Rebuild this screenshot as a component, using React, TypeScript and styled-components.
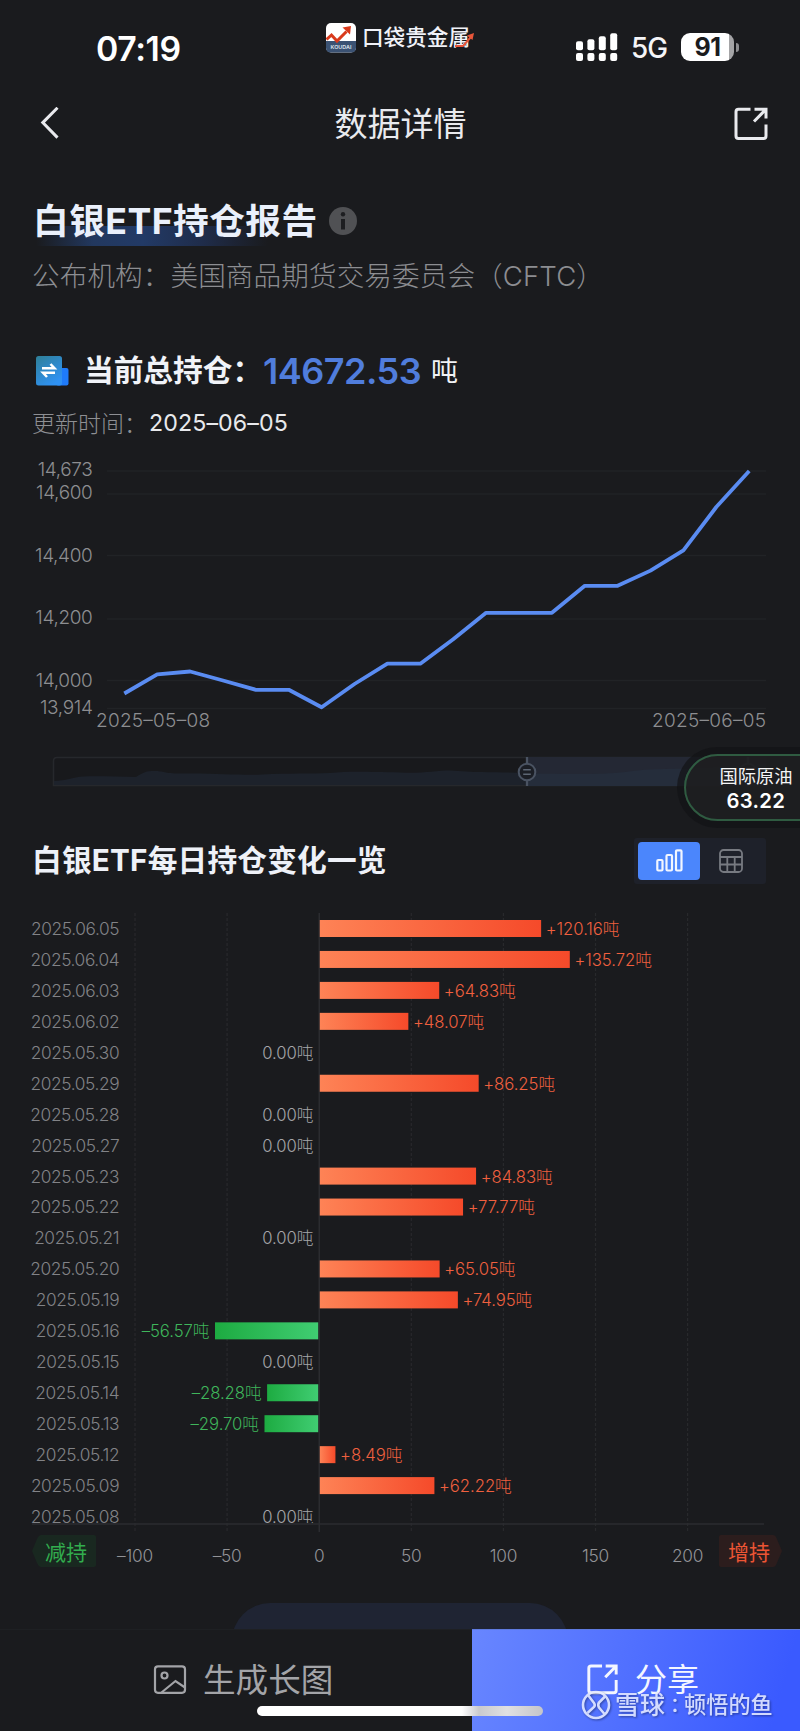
import React from 'react';
import styled, { createGlobalStyle } from 'styled-components';

const FONT = `Inter, "Noto Sans CJK SC", sans-serif`;
const BG = '#1a1b1e';

const Global = createGlobalStyle`
  * { box-sizing: border-box; }
  body { margin: 0; background: ${BG}; }
`;

const Screen = styled.div`
  position: relative;
  width: 800px;
  height: 1731px;
  display: flex;
  flex-direction: column;
  overflow: hidden;
  background: ${BG};
  color: #f2f3f6;
  font-family: ${FONT};
`;

const Txt = styled.span<{ $s: number; $w?: number; $c?: string; $ls?: number }>`
  font-size: ${(p) => p.$s}px;
  font-weight: ${(p) => p.$w ?? 400};
  color: ${(p) => p.$c ?? '#f2f3f6'};
  letter-spacing: ${(p) => p.$ls ?? 0}px;
  line-height: 1;
  white-space: nowrap;
`;

const StatusBar = styled.header`
  height: 88px;
  display: grid;
  grid-template-columns: 326px 250px 1fr;
  flex: none;
`;
const Clock = styled.div`
  padding: 32px 0 0 96px;
`;
const Brand = styled.div`
  display: flex;
  align-items: flex-start;
  padding-top: 23px;
`;
const BrandName = styled.div`
  position: relative;
  margin-left: 6px;
  height: 30px;
  padding-top: 4px;
  line-height: 0;
`;
const BrandArrow = styled.svg`
  position: absolute;
  left: 93px;
  top: 10px;
`;
const Signals = styled.div`
  display: flex;
  align-items: flex-start;
  padding-top: 33px;
`;
const Network = styled.div`
  margin-left: 13px;
  padding-top: 2px;
  width: 37px;
  line-height: 0;
`;
const Battery = styled.div`
  margin-left: 13px;
  width: 53px;
  height: 28px;
  border-radius: 9px;
  background: linear-gradient(90deg, #fff 47.5px, #a4a4a6 47.5px);
  display: flex;
  align-items: center;
  justify-content: center;
`;
const BatteryTip = styled.div`
  width: 3px;
  height: 9px;
  margin: 9.5px 0 0 2px;
  border-radius: 0 4px 4px 0;
  background: #8d8d90;
`;

const NavBar = styled.nav`
  height: 72px;
  flex: none;
  display: grid;
  grid-template-columns: 100px 1fr 100px;
  align-items: center;
  padding: 0 32px 0 33px;
`;
const NavTitle = styled.div`
  text-align: center;
  line-height: 0;
`;
const NavAction = styled.div`
  display: flex;
  justify-content: flex-end;
`;

const Intro = styled.section`
  flex: none;
  height: 182px;
  padding: 40px 0 0 33px;
`;
const TitleRow = styled.div`
  display: flex;
  align-items: center;
  height: 40px;
`;
const Headline = styled.h1`
  margin: 6px 0 0;
  width: 284px;
  height: 46px;
  padding-top: 4px;
  line-height: 0;
  background: linear-gradient(90deg, transparent 3px, #22385f 60px, #223a66 110px, #1f2c4a 170px, transparent 235px) 0 26px / 100% 21px no-repeat;
`;
const InfoIcon = styled.svg`
  margin-left: 12px;
  margin-top: 1px;
`;
const Publisher = styled.div`
  margin: 23px 0 0 -1px;
  line-height: 0;
`;

const Summary = styled.section`
  flex: none;
  height: 110px;
  padding: 7px 0 0 33px;
`;
const TotalRow = styled.div`
  display: flex;
  align-items: center;
  height: 44px;
`;
const TotalLabel = styled.div`
  margin-left: 14px;
  width: 179px;
  line-height: 0;
`;
const TotalValue = styled.div`
  width: 168px;
  line-height: 0;
`;
const UpdatedRow = styled.div`
  display: flex;
  align-items: center;
  height: 30px;
  margin: 16px 0 0 -1px;
`;
const UpdatedLabel = styled.div`
  width: 117px;
  line-height: 0;
`;

const ChartBlock = styled.svg`
  display: block;
  flex: none;
  font-family: ${FONT};
`;

const SectionHead = styled.div`
  flex: none;
  height: 73px;
  padding: 0 34px 26px 32px;
  display: flex;
  justify-content: space-between;
  align-items: center;
`;
const Toggle = styled.div`
  width: 132px;
  height: 46px;
  padding: 4px;
  display: flex;
  border-radius: 3px;
  background: #1e212a;
`;
const ToggleItem = styled.div<{ $active?: boolean }>`
  flex: 1;
  height: 38px;
  border-radius: 4px;
  display: flex;
  align-items: center;
  justify-content: center;
  background: ${(p) => (p.$active ? '#4b86fc' : 'transparent')};
`;

const More = styled.div`
  flex: 1;
  min-height: 0;
  overflow: hidden;
  display: flex;
  justify-content: center;
  padding-top: 27px;
`;
const MorePill = styled.div`
  width: 336px;
  height: 76px;
  flex: none;
  border-radius: 38px;
  background: #1f2433;
`;

const Footer = styled.footer`
  flex: none;
  height: 102px;
  display: grid;
  grid-template-columns: 472px 328px;
`;
const FooterAction = styled.div<{ $primary?: boolean }>`
  display: flex;
  align-items: flex-start;
  gap: ${(p) => (p.$primary ? 17 : 16)}px;
  padding: ${(p) => (p.$primary ? '34px 0 0 115px' : '34px 0 0 153px')};
  border-top: 1px solid ${(p) => (p.$primary ? '#5f7be0' : '#1e2023')};
  background: ${(p) => (p.$primary ? 'linear-gradient(105deg, #6886ff 0%, #3a5aff 92%)' : BG)};
`;
const HomeIndicator = styled.div`
  position: absolute;
  left: 257px;
  top: 1706px;
  width: 286px;
  height: 10px;
  border-radius: 5px;
  background: linear-gradient(90deg, #fff 0, #fff 205px, #c9cace 222px, #e0e0e2 250px, #c4c5ca 286px);
`;
const Watermark = styled.div`
  position: absolute;
  left: 581px;
  top: 1690px;
  height: 30px;
  display: flex;
  align-items: center;
  opacity: 0.88;
  filter: drop-shadow(1px 1px 1px rgba(10, 20, 60, 0.55));
`;
const WatermarkSite = styled(Txt)`
  margin-left: 4px;
`;
const WatermarkColon = styled(Txt)`
  width: 20px;
  margin-right: -1px;
  text-align: center;
  font-family: "Noto Sans CJK TC", sans-serif;
`;

const Ticker = styled.aside`
  position: absolute;
  left: 684px;
  top: 754px;
  width: 140px;
  height: 67px;
  border: 2.5px solid #2f5b41;
  border-radius: 34px 0 0 34px;
  background: rgba(30, 30, 32, 0.93);
  box-shadow: 0 0 0 7px rgba(18, 19, 21, 0.7);
  padding: 11px 0 0 33.5px;
  display: flex;
  flex-direction: column;
  gap: 6px;
`;
const TickerPrice = styled.div`
  padding-left: 7px;
  line-height: 0;
`;

const ShareIcon = ({ w, sw, c }: { w: number; sw: number; c: string }) => (
  <svg width={w} height={w} viewBox="0 0 34 34" fill="none" stroke={c} strokeWidth={sw}>
    <path d="M16.5 2.2H4.5Q2 2.2 2 4.7V29Q2 31.5 4.5 31.5H29.5Q32 31.5 32 29V17.5" />
    <path d="M20.5 2.2H32V11.5M31.5 2.7L20 14.5" />
  </svg>
);

const gridY: [number, string, number][] = [
  [471, '14,673', 469.5],
  [494, '14,600', 492.5],
  [555.5, '14,400', 555],
  [619, '14,200', 617.5],
  [680.5, '14,000', 680],
  [708.5, '13,914', 707],
];
const lineY = [693.5, 674.3, 671.5, 680.5, 689.8, 689.8, 707.3, 684, 663.7, 663.7, 639.3, 612.8, 612.8, 612.8, 585.8, 585.8, 570.6, 550.4, 507, 471];
const linePoints = lineY.map((y, i) => `${(124.3 + i * 32.89).toFixed(1)},${y}`).join(' ');

const LineChart = () => (
  <ChartBlock width="800" height="385" viewBox="0 452 800 385">
    {gridY.map(([y, t, ty]) => (
      <g key={t}>
        <line x1="107" x2="766" y1={y} y2={y} stroke="#212326" strokeWidth="1.3" />
        <text x="92.500" y={ty + 6.6} textAnchor="end" fontSize="19" fontWeight="300" letterSpacing="-0.35" fill="#8d8e91">{t}</text>
      </g>
    ))}
    <polyline points={linePoints} fill="none" stroke="#5a8cf2" strokeWidth="3.8" strokeLinejoin="round" />
    <text x="96" y="727" fontSize="19" fontWeight="300" fill="#8d8e91" textLength="114">2025–05–08</text>
    <text x="652" y="727" fontSize="19" fontWeight="300" fill="#8d8e91" textLength="114">2025–06–05</text>

    <path d="M53.5 785.5V761Q53.5 757.5 57 757.5H766V785.5Z" fill="#18191c" stroke="#26282c" strokeWidth="1.5" />
    <path d="M54 781C66 781 72 777 84 776.5C100 776 120 777 136 777C144 772 146 771 154 771C164 771 164 773.5 180 773.5C220 773 240 775.5 262 774.5C290 773 310 774 330 773C350 771 370 772 400 772.5C420 774 436 770.5 450 770.5C480 773 505 772 527 773V785H54Z" fill="#1d222b" />
    <rect x="527" y="757" width="239" height="29" fill="#242834" />
    <path d="M527 773.5C570 774 600 775 625 772C650 768 680 769 700 768.5L766 764V786H527Z" fill="#252d3b" />
    {[527, 748].map((x) => (
      <g key={x} stroke="#4a5362" fill="none">
        <line x1={x} x2={x} y1="757" y2="786" strokeWidth="2.3" />
        <circle cx={x} cy="772" r="8.3" fill="#1b1e25" strokeWidth="2" />
        <path d={`M${x - 3.8} 769.8h7.6M${x - 3.8} 774.2h7.6`} strokeWidth="1.5" stroke="#5d6674" />
      </g>
    ))}
  </ChartBlock>
);

const rows: [string, number][] = [
  ['2025.06.05', 120.16], ['2025.06.04', 135.72], ['2025.06.03', 64.83], ['2025.06.02', 48.07],
  ['2025.05.30', 0], ['2025.05.29', 86.25], ['2025.05.28', 0], ['2025.05.27', 0],
  ['2025.05.23', 84.83], ['2025.05.22', 77.77], ['2025.05.21', 0], ['2025.05.20', 65.05],
  ['2025.05.19', 74.95], ['2025.05.16', -56.57], ['2025.05.15', 0], ['2025.05.14', -28.28],
  ['2025.05.13', -29.7], ['2025.05.12', 8.49], ['2025.05.09', 62.22], ['2025.05.08', 0],
];
const ticks = [-100, -50, 0, 50, 100, 150, 200];
const UNIT = 1.842;
const ZERO = 319.2;

const BarChart = () => (
  <ChartBlock width="800" height="666" viewBox="0 910 800 666">
    <defs>
      <linearGradient id="up"><stop offset="0" stopColor="#fe8356" /><stop offset="1" stopColor="#f54a2a" /></linearGradient>
      <linearGradient id="down"><stop offset="0" stopColor="#1dab41" /><stop offset="1" stopColor="#40cd72" /></linearGradient>
      <clipPath id="plot"><rect x="0" y="910" width="800" height="613" /></clipPath>
    </defs>
    {ticks.map((t) => {
      const x = ZERO + t * UNIT;
      return (
        <g key={t}>
          <line x1={x} x2={x} y1="913" y2="1532" stroke={t ? '#28292c' : '#303135'} strokeWidth="1.2" strokeDasharray={t ? '3 2' : undefined} />
          <text x={x} y="1561.5" textAnchor="middle" fontSize="17.3" fontWeight="300" letterSpacing="-0.25" fill="#929397">{t < 0 ? `–${-t}` : t}</text>
        </g>
      );
    })}
    <g clipPath="url(#plot)">
      {rows.map(([d, v], i) => {
        const cy = 928.5 + i * 30.95;
        const w = Math.abs(v) * UNIT - (v < 0 ? 1 : 0);
        const label = `${v > 0 ? '+' : v < 0 ? '–' : ''}${Math.abs(v).toFixed(2)}吨`;
        return (
          <g key={d} fontWeight="300">
            <text x="119.2" y={cy + 6.4} textAnchor="end" fontSize="17.3" letterSpacing="-0.38" fill="#828387">{d}</text>
            {v !== 0 && <rect x={v > 0 ? 319.8 : 318.2 - w} y={cy - 8.5} width={w} height="17" fill={v > 0 ? 'url(#up)' : 'url(#down)'} />}
            <text
              x={v > 0 ? ZERO + w + 5.2 : v < 0 ? ZERO - w - 6.5 : 313.5}
              y={cy + 6.4}
              textAnchor={v > 0 ? 'start' : 'end'}
              fontSize="16.7"
              letterSpacing="-0.05"
              fill={v > 0 ? '#f0603f' : v < 0 ? '#3fb65b' : '#a5a6a9'}
            >{label}</text>
          </g>
        );
      })}
    </g>
    <line x1="32" x2="764" y1="1524" y2="1524" stroke="#2b2d30" strokeWidth="1.5" />
    <path d="M41 1535H94Q96 1535 96 1537V1565Q96 1567 94 1567H41Q39 1567 37 1563L32 1551L37 1539Q39 1535 41 1535Z" fill="#192820" />
    <text x="45" y="1560" fontSize="21" fill="#32ad4e">减持</text>
    <path d="M721 1535H773Q775 1535 776 1537L782 1551L776 1565Q775 1567 773 1567H721Q719 1567 719 1565V1537Q719 1535 721 1535Z" fill="#2c1d1d" />
    <text x="728" y="1560" fontSize="21" fill="#ee5534">增持</text>
  </ChartBlock>
);

export default function App() {
  return (
    <>
      <Global />
      <Screen>
        <StatusBar>
          <Clock><Txt $s={33.8} $w={600} $c="#fff" $ls={-0.4}>07:19</Txt></Clock>
          <Brand>
            <svg width="30" height="30" viewBox="0 0 30 30">
              <rect width="30" height="29.5" rx="5" fill="#fff" />
              <path d="M0 18H30V24.5Q30 29.5 25 29.5H5Q0 29.5 0 24.5Z" fill="#3b5273" />
              <path d="M0.5 16.5L5.5 12L11 18L20.5 8.5" fill="none" stroke="#d93a1c" strokeWidth="3" />
              <path d="M16.5 4.5L25 3L24 11.5Z" fill="#d93a1c" />
              <text x="15" y="26" textAnchor="middle" fontFamily="Inter" fontSize="5.4" fontWeight="600" fill="#dfe5ee">KOUDAI</text>
            </svg>
            <BrandName>
              <Txt $s={21.6} $w={500} $c="#f0f2f8">口袋贵金属</Txt>
              <BrandArrow width="20" height="15" viewBox="0 0 20 15">
                <path d="M0 13H8L16 4" fill="none" stroke="#e8563a" strokeWidth="2" />
                <path d="M12 2.5L19 0L17.5 7Z" fill="#e8563a" />
              </BrandArrow>
            </BrandName>
          </Brand>
          <Signals>
            <svg width="42" height="28" viewBox="0 0 42 28" fill="#fff">
              {[9, 11, 14, 17].map((h, i) => (
                <g key={h}>
                  <rect x={i * 11.4} y={17.3 - h} width="7" height={h} rx="2" />
                  <rect x={i * 11.4} y="20" width="7" height="8" rx="2" />
                </g>
              ))}
            </svg>
            <Network><Txt $s={27.8} $w={500} $c="#f5f5f7" $ls={-0.9}>5G</Txt></Network>
            <Battery><Txt $s={25} $w={700} $c="#1a1b1e" $ls={-0.5}>91</Txt></Battery>
            <BatteryTip />
          </Signals>
        </StatusBar>

        <NavBar>
          <svg width="34" height="34" viewBox="0 0 34 34" fill="none" stroke="#e9eaee" strokeWidth="3">
            <path d="M24.5 0.8L9.8 15.6L24.5 30.6" />
          </svg>
          <NavTitle><Txt $s={33} $w={400} $c="#e9eaee">数据详情</Txt></NavTitle>
          <NavAction><ShareIcon w={34} sw={3} c="#e9eaee" /></NavAction>
        </NavBar>

        <Intro>
          <TitleRow>
            <Headline><Txt $s={35.7} $w={700} $c="#eaf0fb" $ls={0.45}>白银ETF持仓报告</Txt></Headline>
            <InfoIcon width="28" height="28" viewBox="0 0 28 28">
              <circle cx="14" cy="14" r="14" fill="#505154" />
              <circle cx="14" cy="7.3" r="2.2" fill="#1d1e21" />
              <rect x="12" y="12" width="4" height="10.5" fill="#1d1e21" />
            </InfoIcon>
          </TitleRow>
          <Publisher><Txt $s={27.6} $w={300} $c="#8c8d91" $ls={0.1}>公布机构：美国商品期货交易委员会（CFTC）</Txt></Publisher>
        </Intro>

        <Summary>
          <TotalRow>
            <svg width="37" height="32" viewBox="0 0 37 32">
              <defs>
                <linearGradient id="doc" x1="0" y1="0" x2="0.6" y2="1"><stop offset="0" stopColor="#2f7f96" /><stop offset="1" stopColor="#2f92f4" /></linearGradient>
              </defs>
              <rect x="23" y="13" width="12.5" height="17.5" rx="2" fill="#1f7bfa" />
              <rect x="3" y="1" width="26" height="29.5" rx="2.5" fill="url(#doc)" />
              <path d="M9 13.3H21.5L17.5 9M22 17.7H10L14 22" fill="none" stroke="#fff" strokeWidth="2.5" />
            </svg>
            <TotalLabel><Txt $s={29.7} $w={700} $c="#f1f3f8">当前总持仓：</Txt></TotalLabel>
            <TotalValue><Txt $s={36} $w={600} $c="#507ddc" $ls={-0.5}>14672.53</Txt></TotalValue>
            <Txt $s={27} $c="#f1f2f5">吨</Txt>
          </TotalRow>
          <UpdatedRow>
            <UpdatedLabel><Txt $s={23} $w={300} $c="#8e8f93">更新时间：</Txt></UpdatedLabel>
            <Txt $s={23.2} $w={400} $c="#e8e9ec" $ls={0.1}>2025–06–05</Txt>
          </UpdatedRow>
        </Summary>

        <LineChart />

        <SectionHead>
          <Txt $s={29.7} $w={700} $c="#eef1f8" $ls={0.2}>白银ETF每日持仓变化一览</Txt>
          <Toggle>
            <ToggleItem $active>
              <svg width="27" height="23" viewBox="0 0 27 23" fill="none" stroke="#f2f6ff" strokeWidth="2.2">
                <rect x="1.3" y="11" width="5.2" height="10.5" rx="1" />
                <rect x="10.5" y="6" width="5.5" height="15.5" rx="1" />
                <rect x="20" y="1.3" width="5.5" height="20.2" rx="1" />
              </svg>
            </ToggleItem>
            <ToggleItem>
              <svg width="24" height="24" viewBox="0 0 24 24" fill="none" stroke="#777a81" strokeWidth="1.8">
                <rect x="1" y="1" width="22" height="22" rx="3.5" />
                <path d="M1 8H23M1 15.5H23M8.3 8V23M15.7 8V23" />
              </svg>
            </ToggleItem>
          </Toggle>
        </SectionHead>

        <BarChart />

        <More><MorePill /></More>

        <Footer>
          <FooterAction>
            <svg width="34" height="32" viewBox="0 0 34 32" fill="none" stroke="#a3a4a8" strokeWidth="2.2">
              <rect x="2" y="2.3" width="30" height="26.5" rx="3" />
              <circle cx="11.5" cy="11.5" r="3" />
              <path d="M8.5 28.5L22.5 17L32 23.5" />
            </svg>
            <Txt $s={32.6} $c="#a3a4a8">生成长图</Txt>
          </FooterAction>
          <FooterAction $primary>
            <ShareIcon w={31} sw={3.2} c="#f4f6ff" />
            <Txt $s={32} $c="#f4f6ff">分享</Txt>
          </FooterAction>
        </Footer>

        <HomeIndicator />
        <Watermark>
          <svg width="30" height="30" viewBox="0 0 30 30" fill="none" stroke="#e6ebff" strokeWidth="2.6">
            <circle cx="15" cy="15" r="13" />
            <path d="M7 5L13 13Q14.5 15 13 17L6.5 23M24 6.5L18 12.5Q16.5 15 18 17.5L23.5 24" />
          </svg>
          <WatermarkSite $s={25} $w={500} $c="#e6ebff">雪球</WatermarkSite>
          <WatermarkColon $s={20} $w={500} $c="#e6ebff">：</WatermarkColon>
          <Txt $s={22.2} $w={500} $c="#e6ebff">顿悟的鱼</Txt>
        </Watermark>

        <Ticker>
          <Txt $s={18.3} $c="#f4f4f5">国际原油</Txt>
          <TickerPrice><Txt $s={20.3} $w={600} $c="#fff" $ls={0.3}>63.22</Txt></TickerPrice>
        </Ticker>
      </Screen>
    </>
  );
}
